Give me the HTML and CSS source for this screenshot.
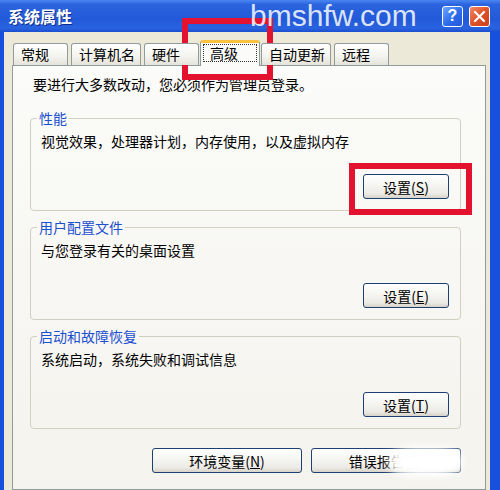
FILE: index.html
```html
<!DOCTYPE html>
<html lang="zh-CN">
<head>
    <meta charset="UTF-8">
    <meta name="viewport" content="width=device-width, initial-scale=1.0">
    <title>系统属性</title>
    <link rel="stylesheet" href="styles.css">
</head>
<body>

    <div class="window">
        <div class="titlebar">
            <span class="title">系统属性</span>
            <div class="caption-buttons">
                <span class="cap-btn help">?</span>
                <span class="cap-btn close">
                    <svg width="13" height="13" viewBox="0 0 13 13">
                        <path d="M2 2 L11 11 M11 2 L2 11" stroke="#fff" stroke-width="2.2" stroke-linecap="round"/>
                    </svg>
                </span>
            </div>
        </div>

        <div class="dialog">
            <div class="tabs">
                <div class="tab">常规</div>
                <div class="tab">计算机名</div>
                <div class="tab">硬件</div>
                <div class="tab active"><span class="focus">高级</span></div>
                <div class="tab">自动更新</div>
                <div class="tab">远程</div>
            </div>

            <div class="tab-page">
                <p class="note">要进行大多数改动，您必须作为管理员登录。</p>

                <fieldset class="group">
                    <legend>性能</legend>
                    <p>视觉效果，处理器计划，内存使用，以及虚拟内存</p>
                    <div class="group-actions">
                        <button class="btn">设置(<u>S</u>)</button>
                    </div>
                </fieldset>

                <fieldset class="group">
                    <legend>用户配置文件</legend>
                    <p>与您登录有关的桌面设置</p>
                    <div class="group-actions">
                        <button class="btn">设置(<u>E</u>)</button>
                    </div>
                </fieldset>

                <fieldset class="group">
                    <legend>启动和故障恢复</legend>
                    <p>系统启动，系统失败和调试信息</p>
                    <div class="group-actions">
                        <button class="btn">设置(<u>T</u>)</button>
                    </div>
                </fieldset>

                <div class="footer-buttons">
                    <button class="btn wide">环境变量(<u>N</u>)</button>
                    <button class="btn wide">错误报告(<u>R</u>)</button>
                </div>
            </div>
        </div>

        <!-- red highlight frames and site stamp laid over the dialog -->
        <div class="mark mark-tab"></div>
        <div class="mark mark-btn"></div>
        <div class="stamp">bmshfw.com</div>
        <div class="smudge"></div>
    </div>

</body>
</html>
```

FILE: styles.css
```css
* {
    box-sizing: border-box;
}
body {
    margin: 0;
    font-family: "Noto Sans CJK SC", "Liberation Sans", sans-serif;
    font-size: 14px;
    color: #000;
}
.window {
    position: relative;
    width: 500px;
    height: 490px;
    overflow: hidden;
    display: flex;
    flex-direction: column;
    background: #1650dc;
}

/* title bar */
.titlebar {
    flex: none;
    height: 32px;
    display: flex;
    align-items: center;
    padding: 0 10px 0 8px;
    background: linear-gradient(#4a86f2 0%, #2b64de 14%, #2259d8 60%, #2a63e0 88%, #1a4fcf 100%);
}
.title {
    color: #fff;
    font-weight: bold;
    font-size: 16px;
    text-shadow: 1px 1px 0 #0d2d8c;
}
.caption-buttons {
    margin-left: auto;
    display: flex;
    gap: 6px;
}
.cap-btn {
    width: 21px;
    height: 21px;
    border: 1px solid #fff;
    border-radius: 3px;
    display: flex;
    align-items: center;
    justify-content: center;
    color: #fff;
}
.help {
    background: linear-gradient(135deg, #6fa6ff, #2c6bec 55%, #2458d8);
    font-family: "Liberation Sans", sans-serif;
    font-weight: bold;
    font-size: 16px;
}
.close {
    background: linear-gradient(135deg, #f08a62, #e0532a 50%, #c8401c);
}

/* dialog body */
.dialog {
    flex: 1;
    display: flex;
    flex-direction: column;
    margin: 0 10px 0 4px;
    padding: 8px 4px 0 8px;
    background: #ece9d8;
}
.tabs {
    position: relative;
    z-index: 1;
    display: flex;
    align-items: flex-end;
    gap: 3px;
    padding-left: 1px;
}
.tab {
    height: 22px;
    min-width: 55px;
    padding: 0 5px 0 7px;
    border: 1px solid #919b9c;
    border-bottom: 0;
    border-radius: 3px 3px 0 0;
    background: linear-gradient(#ffffff, #f3f3ee 60%, #e4e3da);
    line-height: 20px;
    white-space: nowrap;
}
.tab.active {
    height: 26px;
    min-width: 60px;
    margin: 0 -2px -1px;
    padding: 1px 2px 0;
    border-top: 3px solid #fbc23f;
    background: #fbfbf9;
}
.focus {
    display: block;
    height: 18px;
    padding-left: 6px;
    border: 1px dotted #333;
    line-height: 16px;
}
.tab-page {
    flex: 1;
    border: 1px solid #919b9c;
    background: linear-gradient(#fbfbf9, #f4f3ee);
    padding: 10px 24px 0 17px;
}
.note {
    margin: 0 0 0 3px;
    line-height: 16px;
}

/* group boxes */
.group {
    margin: 8px 0 0;
    padding: 7px 11px 11px 10px;
    border: 1px solid #d0d0bf;
    border-radius: 4px;
    min-width: 0;
}
.note + .group {
    margin-top: 18px;
}
.group legend {
    margin-left: -4px;
    padding: 0 2px;
    color: #1c4fd0;
    line-height: 16px;
}
.group p {
    margin: 0;
    line-height: 16px;
}
.group-actions {
    display: flex;
    justify-content: flex-end;
    margin-top: 25px;
}
.btn {
    width: 86px;
    height: 25px;
    padding: 0;
    font: inherit;
    color: #000;
    border: 1px solid #1c3f74;
    border-radius: 3px;
    background: linear-gradient(#ffffff, #f6f6f3 40%, #ecebe6 80%, #d8d3c9);
}
.btn u {
    text-decoration-thickness: 1px;
}
.btn.wide {
    width: 150px;
}
.footer-buttons {
    display: flex;
    justify-content: flex-end;
    gap: 9px;
    margin-top: 19px;
}

/* overlays */
.mark {
    position: absolute;
    border: 6px solid #e3122f;
}
.mark-tab {
    left: 182px;
    top: 18px;
    width: 91px;
    height: 62px;
}
.mark-btn {
    left: 349px;
    top: 163px;
    width: 123px;
    height: 52px;
}
.stamp {
    position: absolute;
    left: 250px;
    top: 1px;
    font-family: "Liberation Sans", sans-serif;
    font-size: 30px;
    line-height: 1;
    color: rgba(236, 242, 255, 0.92);
}
.smudge {
    position: absolute;
    left: 389px;
    top: 447px;
    width: 74px;
    height: 30px;
    border-radius: 40%;
    background: #fff;
    filter: blur(4px);
}
```
